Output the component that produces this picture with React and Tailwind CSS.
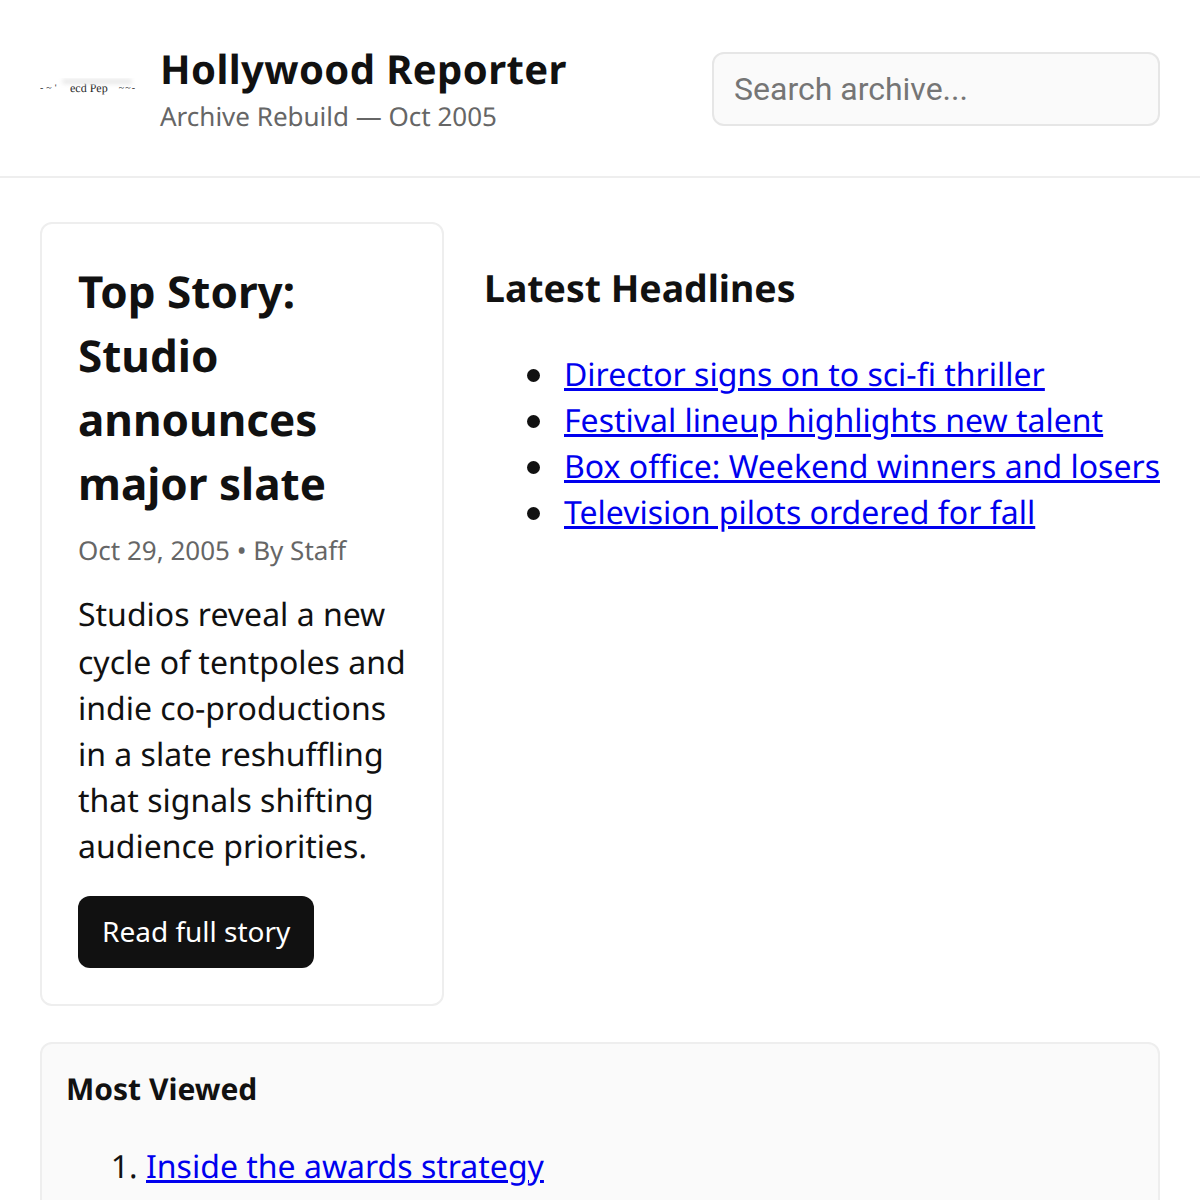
const links = ["Director signs on to sci-fi thriller","Festival lineup highlights new talent","Box office: Weekend winners and losers","Television pilots ordered for fall"];

function Logo() {
  return (
    <div className="relative w-[96px] h-[20px] flex items-center overflow-hidden font-['Liberation_Serif',serif] text-[12px] text-[#222]">
      <span className="text-[10px] tracking-[3px] w-[30px]">-~'</span>
      <span className="leading-none w-[40px]">ecd Pep</span>
      <span className="text-[10px] tracking-[1px] ml-auto">~~-</span>
      <div className="absolute left-[22px] top-[1px] w-[70px] h-[5px] rounded-full bg-[#e8e8e8] blur-[2px]" />
    </div>
  );
}

export default function App() {
  return (
    <div className="h-[1200px] overflow-hidden bg-white text-[#111] font-['Noto_Sans',sans-serif] [text-rendering:geometricPrecision]">
      <header className="flex items-center justify-between border-b-2 border-[#eee] px-10 h-[178px]">
        <div className="flex items-center gap-6">
          <Logo />
          <div className="pb-[1px]">
            <h1 className="text-[40px] font-bold leading-[52px] tracking-[0.4px] mt-[1px]">Hollywood Reporter</h1>
            <p className="text-[26px] leading-[36px] text-[#666] mt-[3px]">Archive Rebuild — Oct 2005</p>
          </div>
        </div>
        <input placeholder="Search archive..." className="mt-[2px] w-[448px] h-[74px] rounded-xl border-2 border-[#e6e6e6] bg-[#fafafa] px-5 text-[32px] font-['Roboto',sans-serif] placeholder:text-[#757575]" />
      </header>
      <main className="px-10 pt-11">
        <div className="grid grid-cols-[404px_1fr] gap-10">
          <article className="rounded-xl border-2 border-[#eee] px-[36px] pt-[35px] h-[784px]">
            <h2 className="text-[44px] font-bold leading-[64px]">Top Story: Studio announces major slate</h2>
            <p className="text-[26px] text-[#666] mt-[17px] leading-[36px]">Oct 29, 2005 • By Staff</p>
            <p className="text-[32px] leading-[46px] mt-[24px]">
              <span className="block h-[48px]">Studios reveal a new</span>
              cycle of tentpoles and indie co-productions in a slate reshuffling that signals shifting audience priorities.
            </p>
            <button className="mt-[26px] h-[72px] px-6 pb-[2px] rounded-xl bg-[#111] text-white text-[28px]">Read full story</button>
          </article>
          <section className="pt-[38px]">
            <h3 className="text-[37.44px] font-bold leading-[56px]">Latest Headlines</h3>
            <ul className="pl-20 mt-[36px] text-[32px] leading-[46px]">
              {links.map(t => (
                <li key={t} className="relative before:absolute before:left-[-37px] before:top-[17px] before:size-[13px] before:rounded-full before:bg-[#111]">
                  <a href="#" className="text-[#0000ee] underline">{t}</a>
                </li>
              ))}
            </ul>
          </section>
        </div>
        <section className="mt-[36px] rounded-xl border-2 border-[#eee] bg-[#fafafa] px-6 pt-[23px] h-[300px]">
          <h4 className="text-[30px] font-bold leading-[44px]">Most Viewed</h4>
          <ol className="list-decimal pl-20 mt-[33px] text-[32px] leading-[46px]">
            <li><a href="#" className="text-[#0000ee] underline">Inside the awards strategy</a></li>
          </ol>
        </section>
      </main>
    </div>
  );
}
